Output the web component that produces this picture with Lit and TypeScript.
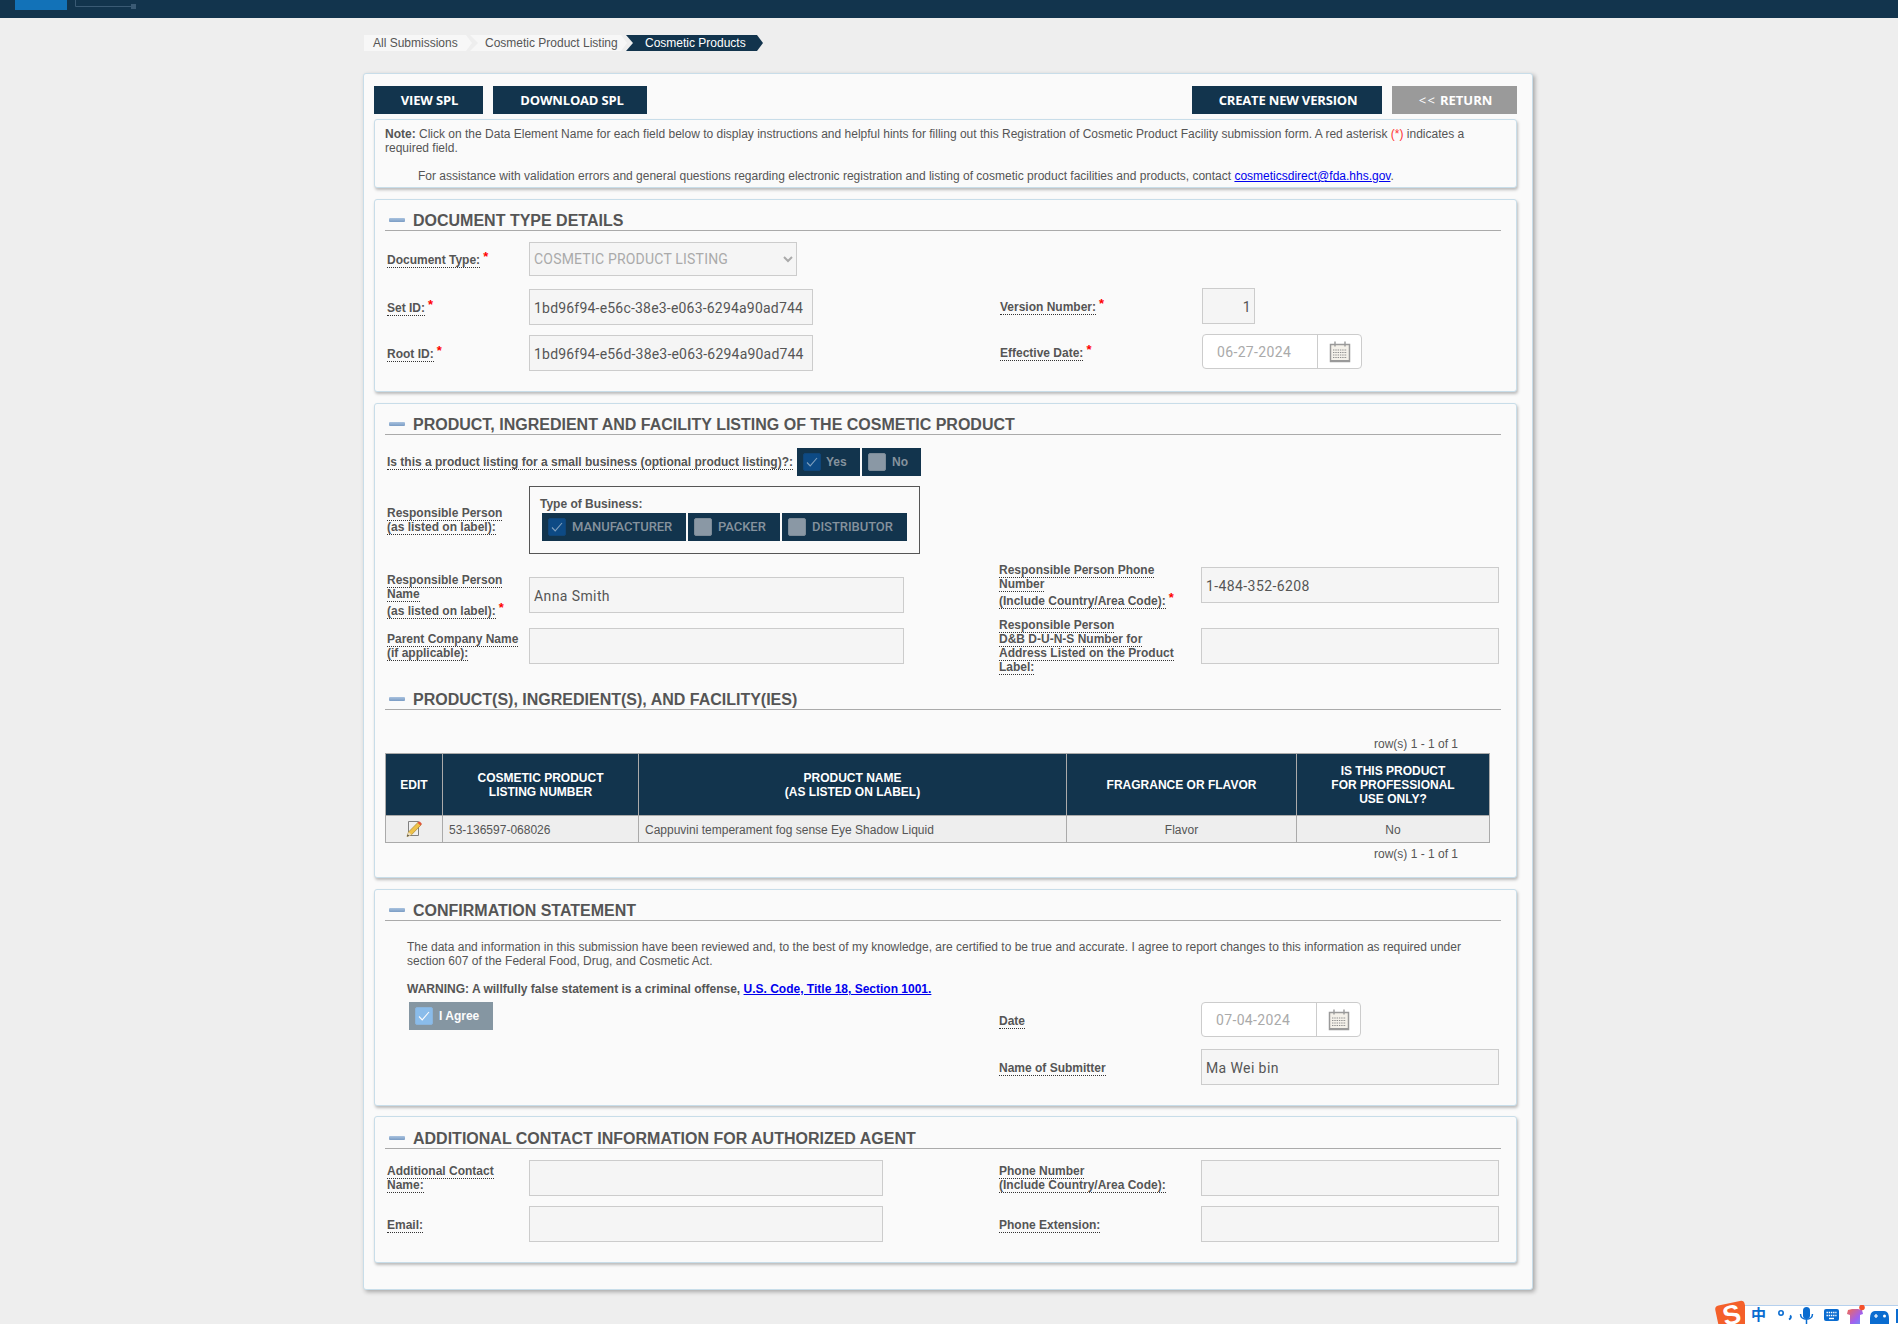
import { LitElement, html, css, svg, TemplateResult } from "lit";
import { customElement } from "lit/decorators.js";

const lines = (ls: (string | [string])[], req = false) => html`<div class="lbl">
  ${ls.map((l, i) => {
    const gap = Array.isArray(l);
    const t = Array.isArray(l) ? l[0] : l;
    return html`<div class=${gap ? "ln gap" : "ln"}><span class="dot">${t}</span>${req && i === ls.length - 1 ? html`<sup class="req">*</sup>` : ""}</div>`;
  })}
</div>`;

const calendar = svg`<svg class="cal" viewBox="0 0 24 24" width="24" height="24" aria-hidden="true">
  <rect x="2.5" y="4.5" width="19" height="17" fill="#f4f1ea" stroke="#9a9a9a" stroke-width="1.5"/>
  <rect x="2" y="20" width="20" height="2" fill="#9a9a9a"/>
  <path d="M7 1.5v5M17 1.5v5" stroke="#9a9a9a" stroke-width="1.4"/>
  <path d="M5 10h14M5 12.5h14M5 15h14M5 17.5h14" stroke="#8f8f8f" stroke-width="1.1" stroke-dasharray="1.4 .9"/>
</svg>`;

const check = svg`<svg viewBox="0 0 18 18" width="18" height="18" aria-hidden="true"><path d="M4 9.5l3.2 3.4L14 5" fill="none" stroke="currentColor" stroke-width="1.1"/></svg>`;

const pencil = svg`<svg viewBox="0 0 16 17" width="16" height="17" aria-hidden="true">
  <path d="M2.5 1.5h10v14h-10z" fill="#efefef" stroke="#808080" stroke-width="1"/>
  <path d="M1 16.5l1.6-4.6L12.4 2l2.8 2.8L5.5 14.8z" fill="#eec24a" stroke="#a8842a" stroke-width=".7"/>
  <path d="M1 16.5l1.6-4.6 3 2.9z" fill="#e9dcc0"/>
  <path d="M1 16.5l.7-2.1 1.4 1.4z" fill="#333"/>
  <path d="M11.6 2.8l1-1a1 1 0 0 1 1.4 0l1.4 1.4a1 1 0 0 1 0 1.4l-1 1z" fill="#e0563c"/>
</svg>`;

@customElement("app-root")
export class AppRoot extends LitElement {
  static styles = css`
    :host { display: block; position: relative; min-height: 1324px; height: 1324px; overflow: hidden; background: #eee; font: 12px/14px "Liberation Sans", Arial, sans-serif; color: #555; }
    * { box-sizing: border-box; }
    .top { height: 18px; background: #12344d; display: flex; }
    .top svg { display: block; }
    .crumbs { display: flex; margin: 17px 0 0 364px; height: 16px; line-height: 16px; }
    .crumb { background: #f7f7f7; color: #555; white-space: nowrap; }
    .c1 { width: 108px; padding-left: 9px; clip-path: polygon(0 0, calc(100% - 6px) 0, 100% 50%, calc(100% - 6px) 100%, 0 100%); }
    .c2 { width: 157px; padding-left: 15px; margin-left: -2px; clip-path: polygon(0 0, calc(100% - 6px) 0, 100% 50%, calc(100% - 6px) 100%, 0 100%, 8px 50%); }
    .c3 { width: 137px; padding-left: 19px; margin-left: -1px; background: #12344d; color: #fff; clip-path: polygon(0 0, calc(100% - 6px) 0, 100% 50%, calc(100% - 6px) 100%, 0 100%, 7px 50%); }
    .panel { width: 1170px; margin: 22px 0 0 363px; height: 1217px; padding: 12px 15px 0 10px; background: #fafafa; border: 1px solid #c8dde9; border-radius: 3px; box-shadow: 2px 2px 4px rgba(0,0,0,.3); }
    .bar { display: flex; height: 28px; }
    .btn { height: 28px; display: flex; align-items: center; justify-content: center; padding-left: 2px; background: #12344d; color: #fff; font: 700 13px "Open Sans", sans-serif; letter-spacing: -.17px; }
    .b1 { width: 109px; margin-right: 10px; }
    .b2 { width: 154px; padding-left: 4px; }
    .b3 { width: 190px; margin-left: auto; }
    .b4 { width: 125px; margin-left: 10px; background: #9a9a9a; letter-spacing: 0; }
    .b4 i { font-style: normal; font-weight: 400; letter-spacing: 1.5px; }
    .note { height: 69px; margin-top: 5px; padding: 7px 10px; background: #fafafa; border: 1px solid #c8dde9; border-radius: 3px; box-shadow: 1px 2px 3px rgba(0,0,0,.25); }
    .note p { margin: 0; }
    .note p + p { margin-top: 14px; padding-left: 33px; }
    a { color: #00e; text-decoration: underline; }
    .red { color: #f33; }
    .card { margin-top: 11px; padding: 0 15px 20px 10px; background: #fafafa; border: 1px solid #c8dde9; border-radius: 3px; box-shadow: 1px 2px 3px rgba(0,0,0,.25); }
    .card.s2 { padding-bottom: 16px; }
    .head { height: 31px; border-bottom: 1px solid #aaa; display: flex; align-items: flex-end; padding: 0 0 0 3px; }
    .head.tall { height: 32px; }
    .head h2 { margin: 0 0 -1px; font: 700 16px/20px "Liberation Sans", Arial, sans-serif; color: #555; white-space: nowrap; }
    .minus { width: 16px; height: 4px; margin: 0 8px 8px 1px; border-radius: 1px; background: linear-gradient(#a9c2df, #7a9cc4); flex: none; }
    .split { display: grid; grid-template-columns: 614px 1fr; }
    .stack { display: flex; flex-direction: column; }
    .fld { display: grid; grid-template-rows: 36px; grid-template-columns: 144px auto; align-items: center; justify-content: start; }
    .fld.r { grid-template-columns: 202px auto; }
    .fld.r.shift { margin-left: 1px; }
    .fld.r .lbl { padding-left: 0; }
    .lbl { padding-left: 2px; font-weight: 700; white-space: nowrap; }
    .ln:only-child { margin-top: 2px; }
    .ln.gap { margin-top: 3px; }
    .dot { border-bottom: 1px dotted #333; }
    .req { color: #f00; font-size: 13px; line-height: 0; margin-left: 3px; vertical-align: 3px; }
    .inp { height: 36px; background: #f5f5f5; border: 1px solid #ccc; padding: 1px 3px 0 4px; font: 14px/34px Roboto, sans-serif; letter-spacing: .4px; color: #555; white-space: nowrap; }
    .id { letter-spacing: .2px; }
    .w284 { width: 284px; }
    .w375 { width: 375px; }
    .w354 { width: 354px; }
    .w297 { width: 298px; }
    .w53 { width: 53px; text-align: right; }
    select { display: block; width: 268px; height: 34px; margin: 0; padding: 0; background: #f5f5f5; border: 1px solid #ccc; font: 14px Roboto, sans-serif; letter-spacing: .2px; color: #aaa; opacity: 1; }
    .fld.sel { grid-template-rows: 34px; }
    .date { display: flex; align-self: start; width: 160px; height: 35px; background: #fff; border: 1px solid #ccc; border-radius: 4px; font: 14px/34px Roboto, sans-serif; letter-spacing: .35px; color: #aaa; }
    .date span { width: 115px; padding-left: 14px; border-right: 1px solid #ccc; }
    .date div { flex: 1; display: flex; align-items: center; justify-content: center; }
    .sec1 { margin-top: 11px; }
    .gap13 { height: 13px; }
    .gap10 { height: 10px; }
    .gap11 { height: 11px; }
    .mt57 { margin-top: 57px; }
    .small { display: flex; margin-top: 13px; height: 28px; align-items: center; }
    .small .lbl { width: 412px; }
    .small .ln { margin: 0; }
    .tog { height: 28px; background: #12344d; color: #85929d; display: flex; align-items: center; font-weight: 700; }
    .box { width: 18px; height: 18px; margin-right: 6px; border-radius: 2px; background: #8a98a5; border: 1px solid #7b8a97; flex: none; }
    .box.on { background: #0d4a85; border-color: #0f4578; color: #7f9fbd; }
    .box svg { display: block; margin: -1px; }
    .y { width: 63px; padding-left: 6px; margin-right: 2px; }
    .y .box { margin-right: 5px; }
    .n { width: 59px; padding-left: 6px; }
    .biz { display: grid; grid-template-columns: 144px auto; margin-top: 10px; align-items: center; justify-content: start; }
    .bizbox { width: 391px; height: 68px; border: 1px solid #555; padding: 9px 0 0 10px; }
    .bizbox b { display: block; height: 17px; line-height: 17px; }
    .togs { display: flex; gap: 2px; margin-left: 2px; }
    .togs .tog { padding: 0 0 1px 6px; font: 500 13px Roboto, sans-serif; letter-spacing: -.05px; }
    .togs .box { margin-bottom: -1px; }
    .t1 { width: 144px; } .t2 { width: 92px; } .t3 { width: 125px; }
    .lstack { margin-top: 23px; }
    .rstack { margin-top: 13px; }
    .gap15 { height: 15px; }
    .gap25 { height: 25px; }
    .sub { margin-top: 15px; }
    .count { width: 1073px; text-align: right; height: 14px; }
    .c-top { margin-top: 27px; margin-bottom: 2px; }
    .c-bot { margin-top: 4px; }
    table { border-collapse: collapse; table-layout: fixed; width: 1104px; }
    th, td { border: 1px solid #aaa; text-align: center; padding: 0; }
    th { height: 62px; background: #12344d; color: #fff; font-weight: 700; }
    td { height: 27px; padding-top: 1px; background: #eee; }
    td.l { text-align: left; padding-left: 6px; }
    td svg { display: block; margin: -3px auto 0; }
    .stmt { margin: 19px 22px 0; }
    .warn { margin: 14px 22px 0; font-weight: 700; }
    .agree { width: 84px; height: 28px; margin: 6px 0 0 24px; opacity: .5; background: #12344d; color: #fff; display: flex; align-items: center; padding-left: 6px; font-weight: 700; }
    .agree .box { background: #1d7fdc; border-color: #1b70c0; color: #fff; margin-right: 6px; }
    .conf-r { margin-top: 6px; }
    .add { padding-bottom: 20px; margin-top: 10px; }
    .add .stack { margin-top: 11px; }
    .ime { position: absolute; right: 0; bottom: 0; width: 153px; height: 19px; background: #fff; border-top: 1px solid #b5d0ee; color: #0a6cd0; }
    .ime svg { position: absolute; left: 0; top: -1px; }
    .zh { position: absolute; left: 6px; top: -2px; font: 700 15px/20px "Noto Sans CJK SC", sans-serif; }
    .logo { position: absolute; right: 153px; bottom: -6px; width: 30px; height: 27px; margin-right: -2px; background: #f4602a; border-radius: 4px; transform: rotate(-12deg); color: #fff; font: 900 27px/25px "Liberation Sans", sans-serif; text-align: center; }
  `;

  private inp(v: string, cls: string) {
    return html`<div class="inp ${cls}">${v}</div>`;
  }

  private date(v: string) {
    return html`<div class="date"><span>${v}</span><div>${calendar}</div></div>`;
  }

  private head(t: string, cls = "") {
    return html`<div class="head ${cls}"><i class="minus"></i><h2>${t}</h2></div>`;
  }

  private fld(label: TemplateResult, ctl: TemplateResult, cls = "") {
    return html`<div class="fld ${cls}">${label}${ctl}</div>`;
  }

  render() {
    return html`
      <div class="top">
        <svg width="150" height="18" viewBox="0 0 150 18" aria-hidden="true">
          <rect x="15" y="0" width="52" height="10" fill="#1272b8"/>
          <path d="M75.5 0v6.5H132" fill="none" stroke="#3a5a74" stroke-width="1"/>
          <rect x="131" y="4" width="5" height="5" fill="#3a5a74"/>
        </svg>
      </div>
      <nav class="crumbs">
        <div class="crumb c1">All Submissions</div>
        <div class="crumb c2">Cosmetic Product Listing</div>
        <div class="crumb c3">Cosmetic Products</div>
      </nav>
      <main class="panel">
        <div class="bar">
          <div class="btn b1">VIEW SPL</div>
          <div class="btn b2">DOWNLOAD SPL</div>
          <div class="btn b3">CREATE NEW VERSION</div>
          <div class="btn b4"><i>&lt;&lt;</i>&nbsp;RETURN</div>
        </div>
        <section class="note">
          <p><b>Note:</b> Click on the Data Element Name for each field below to display instructions and helpful hints for filling out this Registration of Cosmetic Product Facility submission form. A red asterisk <span class="red">(*)</span> indicates a required field.</p>
          <p>For assistance with validation errors and general questions regarding electronic registration and listing of cosmetic product facilities and products, contact <a>cosmeticsdirect@fda.hhs.gov</a>.</p>
        </section>

        <section class="card">
          ${this.head("DOCUMENT TYPE DETAILS")}
          <div class="split">
            <div class="stack sec1">
              ${this.fld(lines(["Document Type:"], true), html`<select disabled><option>COSMETIC PRODUCT LISTING</option></select>`, "sel")}
              <div class="gap13"></div>
              ${this.fld(lines(["Set ID:"], true), this.inp("1bd96f94-e56c-38e3-e063-6294a90ad744", "w284 id"))}
              <div class="gap10"></div>
              ${this.fld(lines(["Root ID:"], true), this.inp("1bd96f94-e56d-38e3-e063-6294a90ad744", "w284 id"))}
            </div>
            <div class="stack mt57">
              ${this.fld(lines(["Version Number:"], true), this.inp("1", "w53"), "r shift")}
              <div class="gap10"></div>
              ${this.fld(lines(["Effective Date:"], true), this.date("06-27-2024"), "r shift")}
            </div>
          </div>
        </section>

        <section class="card s2">
          ${this.head("PRODUCT, INGREDIENT AND FACILITY LISTING OF THE COSMETIC PRODUCT")}
          <div class="small">
            ${lines(["Is this a product listing for a small business (optional product listing)?:"])}
            <div class="tog y"><div class="box on">${check}</div>Yes</div>
            <div class="tog n"><div class="box"></div>No</div>
          </div>
          <div class="biz">
            ${lines(["Responsible Person", "(as listed on label):"])}
            <div class="bizbox">
              <b>Type of Business:</b>
              <div class="togs">
                <div class="tog t1"><div class="box on">${check}</div>MANUFACTURER</div>
                <div class="tog t2"><div class="box"></div>PACKER</div>
                <div class="tog t3"><div class="box"></div>DISTRIBUTOR</div>
              </div>
            </div>
          </div>
          <div class="split">
            <div class="stack lstack">
              ${this.fld(lines(["Responsible Person", "Name", ["(as listed on label):"]], true), this.inp("Anna Smith", "w375"))}
              <div class="gap15"></div>
              ${this.fld(lines(["Parent Company Name", "(if applicable):"]), this.inp("", "w375"))}
            </div>
            <div class="stack rstack">
              ${this.fld(lines(["Responsible Person Phone", "Number", ["(Include Country/Area Code):"]], true), this.inp("1-484-352-6208", "w297"), "r")}
              <div class="gap25"></div>
              ${this.fld(lines(["Responsible Person", "D&B D-U-N-S Number for", "Address Listed on the Product", "Label:"]), this.inp("", "w297"), "r")}
            </div>
          </div>
          <div class="sub">${this.head("PRODUCT(S), INGREDIENT(S), AND FACILITY(IES)")}</div>
          <div class="count c-top">row(s) 1 - 1 of 1</div>
          <table>
            <colgroup><col width="57"><col width="196"><col width="428"><col width="230"><col width="193"></colgroup>
            <thead><tr>
              <th>EDIT</th>
              <th>COSMETIC PRODUCT<br>LISTING NUMBER</th>
              <th>PRODUCT NAME<br>(AS LISTED ON LABEL)</th>
              <th>FRAGRANCE OR FLAVOR</th>
              <th>IS THIS PRODUCT<br>FOR PROFESSIONAL<br>USE ONLY?</th>
            </tr></thead>
            <tbody><tr>
              <td>${pencil}</td>
              <td class="l">53-136597-068026</td>
              <td class="l">Cappuvini temperament fog sense Eye Shadow Liquid</td>
              <td>Flavor</td>
              <td>No</td>
            </tr></tbody>
          </table>
          <div class="count c-bot">row(s) 1 - 1 of 1</div>
        </section>

        <section class="card">
          ${this.head("CONFIRMATION STATEMENT")}
          <p class="stmt">The data and information in this submission have been reviewed and, to the best of my knowledge, are certified to be true and accurate. I agree to report changes to this information as required under section 607 of the Federal Food, Drug, and Cosmetic Act.</p>
          <p class="warn">WARNING: A willfully false statement is a criminal offense, <a>U.S. Code, Title 18, Section 1001.</a></p>
          <div class="split">
            <div><div class="agree"><div class="box">${check}</div>I Agree</div></div>
            <div class="stack conf-r">
              ${this.fld(lines(["Date"]), this.date("07-04-2024"), "r")}
              <div class="gap11"></div>
              ${this.fld(lines(["Name of Submitter"]), this.inp("Ma Wei bin", "w297"), "r")}
            </div>
          </div>
        </section>

        <section class="card add">
          ${this.head("ADDITIONAL CONTACT INFORMATION FOR AUTHORIZED AGENT", "tall")}
          <div class="split">
            <div class="stack">
              ${this.fld(lines(["Additional Contact", "Name:"]), this.inp("", "w354"))}
              <div class="gap10"></div>
              ${this.fld(lines(["Email:"]), this.inp("", "w354"))}
            </div>
            <div class="stack">
              ${this.fld(lines(["Phone Number", "(Include Country/Area Code):"]), this.inp("", "w297"), "r")}
              <div class="gap10"></div>
              ${this.fld(lines(["Phone Extension:"]), this.inp("", "w297"), "r")}
            </div>
          </div>
        </section>
      </main>

      <div class="logo">S</div>
      <div class="ime">
        <span class="zh">中</span>
        <svg width="153" height="20" viewBox="0 0 153 20" aria-hidden="true">
          <circle cx="36" cy="8" r="2.2" fill="none" stroke="#0a6cd0" stroke-width="1.6"/>
          <path d="M45 10.5c1.6 1 .8 3-1 4" fill="none" stroke="#0a6cd0" stroke-width="2"/>
          <rect x="58" y="2" width="7" height="12" rx="3.5" fill="#0a6cd0"/>
          <path d="M55.5 9c0 7 12 7 12 0M61.5 15v5" fill="none" stroke="#0a6cd0" stroke-width="1.5"/>
          <rect x="79" y="4" width="15" height="12" rx="2" fill="#0a6cd0"/>
          <path d="M81.5 7.5h10M81.5 10.5h10" stroke="#fff" stroke-width="1.4" stroke-dasharray="1.4 .8"/>
          <path d="M84 13.5h5" stroke="#fff" stroke-width="1.4"/>
          <defs><linearGradient id="sh" x1="0" y1="0" x2="1" y2="1"><stop offset="0" stop-color="#f46a50"/><stop offset=".6" stop-color="#a060f0"/><stop offset="1" stop-color="#60a0f0"/></linearGradient></defs>
          <path d="M103 5l4-1h6l4 1 1 4-3 1v10h-10V10l-3-1z" fill="url(#sh)"/>
          <circle cx="117" cy="2.5" r="2.8" fill="#f4502a"/>
          <path d="M130 6h9c4 0 5 4 5 8v6h-19v-6c0-4 1-8 5-8z" fill="#0a6cd0"/>
          <path d="M129 11h4M131 9v4" stroke="#fff" stroke-width="1.2"/>
          <circle cx="139.5" cy="11" r="1.5" fill="#fff"/>
          <rect x="151" y="4" width="2" height="14" fill="#0a6cd0"/>
        </svg>
      </div>
    `;
  }
}
